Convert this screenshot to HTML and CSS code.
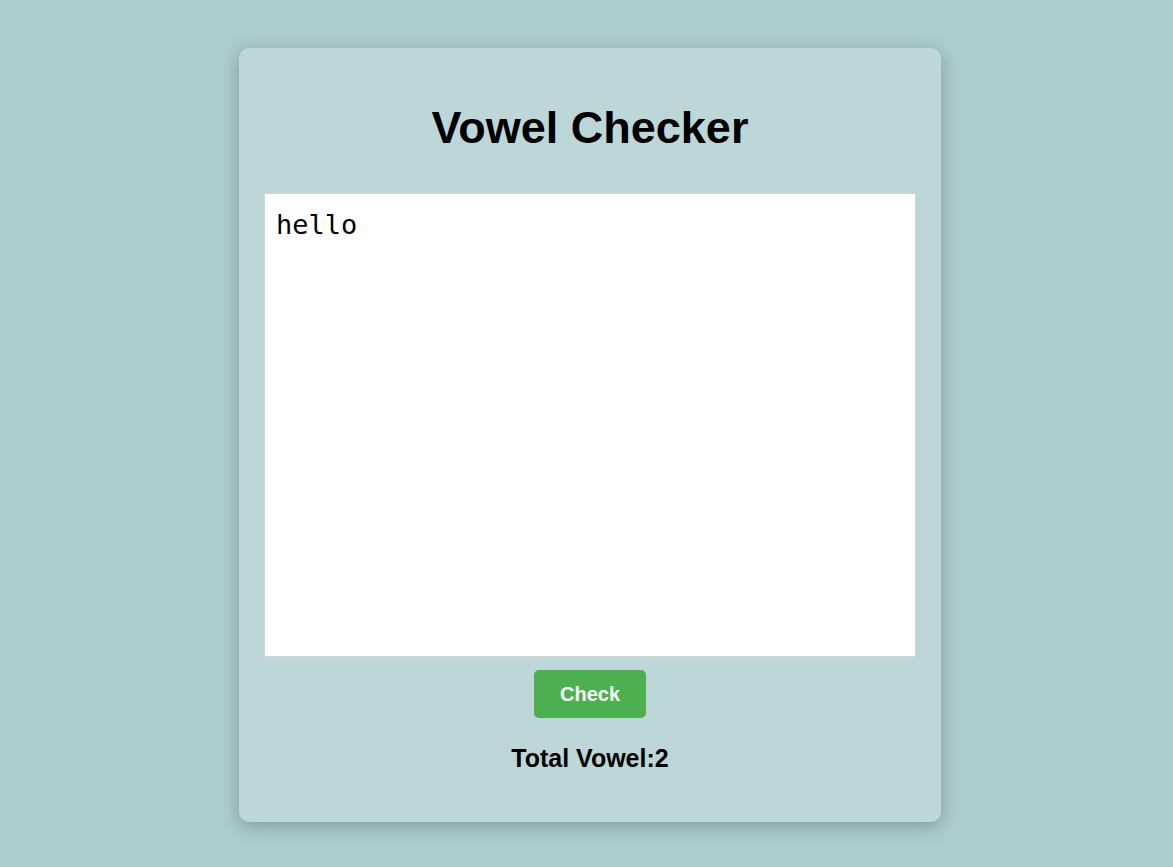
FILE: index.html
```html
<!DOCTYPE html>
<html lang="en">
<head>
<meta charset="utf-8">
<title>Vowel Checker</title>
<link rel="stylesheet" href="styles.css">
</head>
<body>
<main class="page">
  <section class="card">
    <h1 class="title">Vowel Checker</h1>
    <textarea class="input">hello</textarea>
    <button class="check-btn" type="button">Check</button>
    <p class="result">Total Vowel:2</p>
  </section>
</main>
</body>
</html>
```
FILE: styles.css
```css
html, body {
  margin: 0;
  padding: 0;
  background: #adcccd;
  font-family: "Liberation Sans", Arial, sans-serif;
}
.page {
  display: flex;
  justify-content: center;
  padding: 48px 0 0 7px;
  min-height: 819px;
}
.card {
  box-sizing: border-box;
  width: 702px;
  height: 774px;
  padding: 25px;
  background: #bdd7d8;
  border-radius: 10px;
  box-shadow: 0 4px 18px rgba(0, 0, 0, 0.25);
  display: flex;
  flex-direction: column;
  align-items: center;
}
.title {
  margin: 30px 0 40px;
  font-size: 45px;
  line-height: 50px;
  font-weight: bold;
  color: #000;
  text-align: center;
}
.input {
  box-sizing: border-box;
  width: 652px;
  height: 464px;
  margin: 0;
  padding: 15px 11px 10px;
  border: 1px solid #d3d3d3;
  background: #fff;
  font-family: "DejaVu Sans Mono", monospace;
  font-size: 27px;
  color: #000;
  resize: none;
  outline: none;
  display: block;
}
.check-btn {
  margin-top: 13px;
  height: 48px;
  padding: 0 26px;
  border: none;
  border-radius: 5px;
  background: #4caf50;
  color: #fff;
  font-family: "Liberation Sans", Arial, sans-serif;
  font-size: 20px;
  font-weight: bold;
  cursor: pointer;
}
.result {
  margin: 26px 0 0;
  font-size: 25px;
  line-height: 28px;
  font-weight: bold;
  color: #000;
}
```
